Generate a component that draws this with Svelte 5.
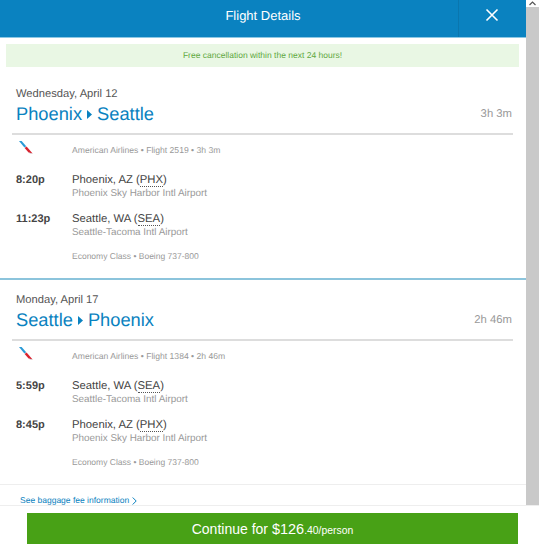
<script>
  const trips = [
    { date: 'Wednesday, April 12', from: 'Phoenix', to: 'Seattle', dur: '3h 3m', flight: 'American Airlines • Flight 2519 • 3h 3m',
      stops: [
        { time: '8:20p', city: 'Phoenix, AZ', code: 'PHX', airport: 'Phoenix Sky Harbor Intl Airport' },
        { time: '11:23p', city: 'Seattle, WA', code: 'SEA', airport: 'Seattle-Tacoma Intl Airport' }
      ] },
    { date: 'Monday, April 17', from: 'Seattle', to: 'Phoenix', dur: '2h 46m', flight: 'American Airlines • Flight 1384 • 2h 46m',
      stops: [
        { time: '5:59p', city: 'Seattle, WA', code: 'SEA', airport: 'Seattle-Tacoma Intl Airport' },
        { time: '8:45p', city: 'Phoenix, AZ', code: 'PHX', airport: 'Phoenix Sky Harbor Intl Airport' }
      ] }
  ];
</script>

<div class="page">
  <div class="top">
    <div class="main">
      <header class="head">
        <div class="title">Flight Details</div>
        <div class="close">
          <svg width="14" height="14" viewBox="0 0 14 14"><path d="M1.5 1.5 L12.5 12.5 M12.5 1.5 L1.5 12.5" stroke="#fff" stroke-width="1.6" fill="none"/></svg>
        </div>
      </header>
      <div class="notice">Free cancellation within the next 24 hours!</div>
      {#each trips as t, i}
        <section class="trip" class:first={i === 0}>
          <div class="date">{t.date}</div>
          <div class="route">
            <div class="cities">
              <span>{t.from}</span>
              <svg class="arrow" width="5" height="9" viewBox="0 0 5 9"><path d="M0 0 L5 4.5 L0 9 Z" fill="#0a82c0"/></svg>
              <span>{t.to}</span>
            </div>
            <div class="dur">{t.dur}</div>
          </div>
          <div class="flight">
            <svg class="logo" width="14" height="14" viewBox="0 0 14 14">
              <path d="M0 0 L2.6 0 L7.2 5.2 L5.4 6.6 Z" fill="#2a9ad6"/>
              <path d="M5.6 7 L7.6 5.4 L13.6 12.6 L9.6 11.6 Z" fill="#d8232f"/>
              <path d="M9.6 11.6 L13.6 12.6 L11 12.6 Z" fill="#aab4c0"/>
            </svg>
            <span>{t.flight}</span>
          </div>
          {#each t.stops as s}
            <div class="stop">
              <div class="time">{s.time}</div>
              <div>
                <div class="city">{s.city} (<span class="code">{s.code}</span>)</div>
                <div class="airport">{s.airport}</div>
              </div>
            </div>
          {/each}
          <div class="meta">Economy Class • Boeing 737-800</div>
        </section>
      {/each}
      <div class="baggage">
        <span>See baggage fee information</span>
        <svg width="5" height="8" viewBox="0 0 5 8"><path d="M0.7 0.5 L4.2 4 L0.7 7.5" stroke="#0a82c0" fill="none"/></svg>
      </div>
    </div>
    <div class="scroll">
      <div class="up">
        <svg width="7" height="5" viewBox="0 0 7 5"><path d="M0.5 4 L3.5 1 L6.5 4" stroke="#555" stroke-width="1.2" fill="none"/></svg>
      </div>
      <div class="thumb"></div>
    </div>
  </div>
  <footer class="foot">
    <button class="cta">Continue for <span class="big">$126</span><span class="small">.40/person</span></button>
  </footer>
</div>

<style>
  :global(body) { margin: 0; background: #fff; }
  .page { width: 539px; height: 550px; display: flex; flex-direction: column; overflow: hidden; font-family: "Liberation Sans", Arial, sans-serif; color: #444; text-rendering: geometricPrecision; }
  .top { height: 505px; display: flex; overflow: hidden; }
  .main { width: 526px; flex: none; overflow: hidden; }
  .head { height: 37px; background: #0a82c0; border-bottom: 1px solid #8cc8e4; display: flex; position: relative; }
  .title { flex: 1; text-align: center; color: #fff; font-size: 13px; line-height: 32px; }
  .close { position: absolute; right: 0; top: 0; width: 68px; height: 37px; border-left: 1px solid #0a76ae; display: flex; align-items: center; justify-content: center; box-sizing: border-box; padding: 0 2px 7px 0; }
  .notice { margin: 6px 7px 0 6px; height: 23px; background: #e9f7e4; color: #5fa83f; font-size: 8.5px; line-height: 23px; text-align: center; }
  .trip { padding: 12px 14px 0 16px; height: 212px; box-sizing: border-box; border-top: 2px solid #8cc4dc; }
  .trip.first { border-top: 0; height: 211px; padding-top: 19px; }
  .date { font-size: 11.2px; line-height: 16px; color: #555; }
  .route { display: flex; justify-content: space-between; align-items: center; height: 24px; }
  .cities { display: flex; align-items: center; gap: 5px; font-size: 18.3px; color: #0a82c0; }
  .dur { font-size: 11.3px; color: #999; }
  .flight { margin: 7px -1px 0 -4px; border-top: 2px solid #ddd; padding: 6px 0 0 4px; display: flex; align-items: center; height: 18px; font-size: 8.6px; color: #999; position: relative; }
  .flight span { margin-left: 56px; }
  .flight .logo { position: absolute; left: 7px; top: 6px; }
  .stop { display: flex; margin-top: 11px; height: 28px; }
  .flight + .stop { margin-top: 13px; }
  .time { width: 56px; font-size: 11px; line-height: 16px; font-weight: bold; color: #444; }
  .city { font-size: 11.3px; line-height: 16px; color: #444; }
  .code { border-bottom: 1px dotted #555; }
  .airport { font-size: 9.9px; line-height: 12px; color: #999; }
  .meta { margin: 11px 0 0 56px; font-size: 8.5px; line-height: 12px; color: #999; }
  .baggage { border-top: 1px solid #eee; margin-top: -6px; padding: 10px 0 0 20px; font-size: 8.5px; color: #0a82c0; display: flex; align-items: center; gap: 3px; line-height: 11px; }
  .scroll { width: 13px; flex: none; background: #f1f1f1; display: flex; flex-direction: column; }
  .up { height: 7px; background: #fff; display: flex; align-items: center; justify-content: center; }
  .thumb { flex: 1; background: #c9c9c9; }
  .foot { height: 45px; border-top: 1px solid #eee; box-sizing: border-box; padding: 7px 21px 0 27px; }
  .cta { width: 491px; height: 31px; border: 0; background: #48a116; color: #fff; font-family: inherit; font-size: 14px; padding: 2px 0 0; display: block; line-height: 29px; }
  .big { font-size: 14.5px; }
  .small { font-size: 10.4px; }
</style>
